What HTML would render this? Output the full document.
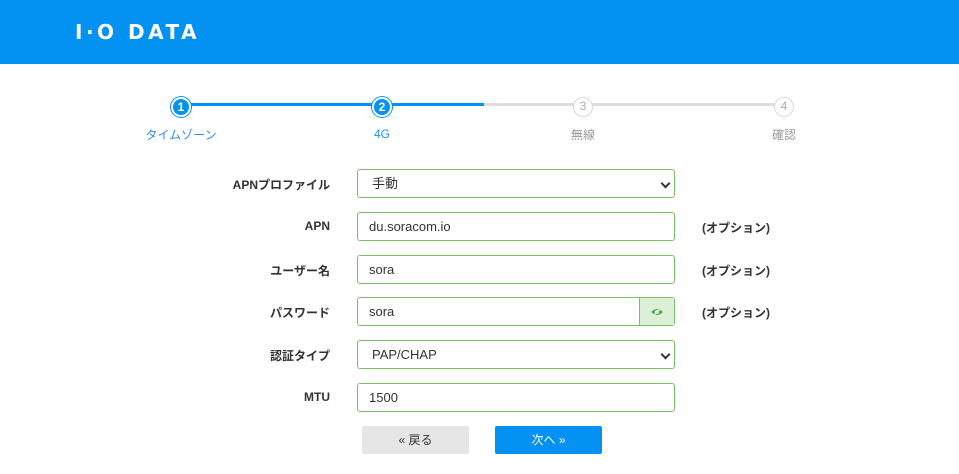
<!DOCTYPE html>
<html><head><meta charset="utf-8"><style>
body{margin:0;width:959px;height:474px;overflow:hidden;background:#fff;font-family:"Liberation Sans","Noto Sans CJK JP",sans-serif;font-size:13px;color:#333}
.hd{position:absolute;left:0;top:0;width:959px;height:64px;background:#0391f2}
.logo{position:absolute;left:75px;top:20px;color:#fff;font-weight:bold;font-size:20px;letter-spacing:3.5px;font-family:"DejaVu Sans","Liberation Sans",sans-serif}
.ln{position:absolute;height:3px;top:103px}
.c{position:absolute;top:97px;width:20px;height:20px;border-radius:50%;box-sizing:border-box;text-align:center;line-height:20px;font-size:12px;font-weight:bold}
.ca{background:#0391f2;color:#fff;border:2px solid #fff;line-height:16px;box-shadow:0 0 0 1px #0391f2}
.cg{background:#fff;border:1.5px solid #d8d8d8;color:#aaa;line-height:17px;font-weight:normal}
.sl{position:absolute;top:126px;font-size:12px;transform:translateX(-50%);white-space:nowrap}
.lab{position:absolute;right:629px;font-weight:bold;font-size:12px;color:#333}
.in{position:absolute;left:357px;width:318px;height:29px;box-sizing:border-box;border:1px solid #7cc06a;border-radius:3px;background:#fff;padding-left:11px;line-height:27px;font-size:13px;color:#333}
.opt{position:absolute;left:702px;font-weight:bold;font-size:12px}
.chev{position:absolute;right:5px;top:10px;width:5px;height:5px;border-right:2px solid #333;border-bottom:2px solid #333;transform:rotate(45deg)}
.btn{position:absolute;top:426px;height:28px;width:107px;border-radius:2px;text-align:center;line-height:28px;font-size:12px}
</style></head><body>
<div class="hd"><div class="logo">I·O DATA</div></div>
<div class="ln" style="left:181px;width:303px;background:#0391f2"></div>
<div class="ln" style="left:484px;width:300px;background:#ddd"></div>
<div class="c ca" style="left:171px">1</div>
<div class="c ca" style="left:372px">2</div>
<div class="c cg" style="left:573px">3</div>
<div class="c cg" style="left:774px">4</div>
<div class="sl" style="left:181px;color:#2a8ee8">タイムゾーン</div>
<div class="sl" style="left:382px;color:#2a8ee8;top:127px">4G</div>
<div class="sl" style="left:583px;color:#999">無線</div>
<div class="sl" style="left:784px;color:#999">確認</div>

<div class="lab" style="top:176px">APNプロファイル</div>
<div class="in" style="top:169px;padding-left:14px">手動<div class="chev"></div></div>
<div class="lab" style="top:219px">APN</div>
<div class="in" style="top:212px">du.soracom.io</div>
<div class="opt" style="top:219px">(オプション)</div>
<div class="lab" style="top:262px">ユーザー名</div>
<div class="in" style="top:255px">sora</div>
<div class="opt" style="top:262px">(オプション)</div>
<div class="lab" style="top:304px">パスワード</div>
<div class="in" style="top:297px">sora<div style="position:absolute;right:0;top:0;width:34px;height:27px;background:#dcefd7;border-left:1px solid #7cc06a;text-align:center"><svg width="14" height="10" viewBox="0 0 14 10" style="margin-top:9px"><path d="M1 5Q7 -1 13 5Q7 11 1 5Z" fill="#4caf50"/><circle cx="7" cy="5" r="2" fill="#dcefd7"/><path d="M3 9L11 1" stroke="#dcefd7" stroke-width="1.5"/></svg></div></div>
<div class="opt" style="top:304px">(オプション)</div>
<div class="lab" style="top:347px">認証タイプ</div>
<div class="in" style="top:340px;padding-left:14px">PAP/CHAP<div class="chev"></div></div>
<div class="lab" style="top:390px">MTU</div>
<div class="in" style="top:383px">1500</div>
<div class="btn" style="left:362px;background:#e6e6e6;color:#333">« 戻る</div>
<div class="btn" style="left:495px;background:#0391f2;color:#fff">次へ »</div>
</body></html>
